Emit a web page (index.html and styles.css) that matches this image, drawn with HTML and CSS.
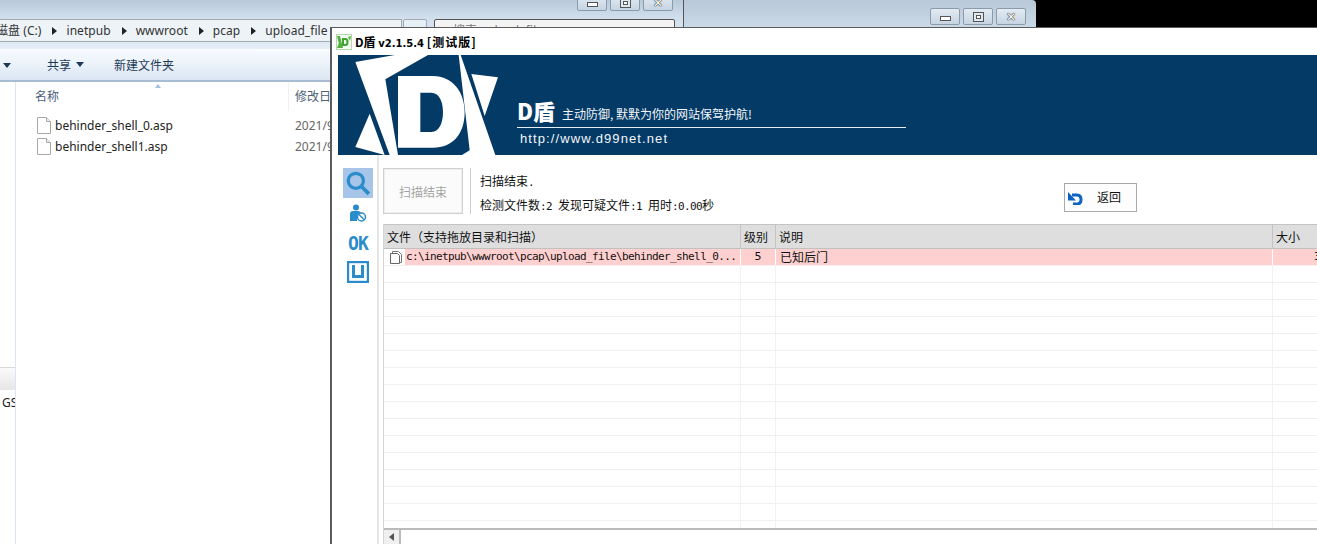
FILE: index.html
```html
<!DOCTYPE html>
<html lang="zh">
<head>
<meta charset="utf-8">
<title>D盾</title>
<link rel="stylesheet" href="styles.css">
</head>
<body>
<div class="desktop">
  <div class="win-back">
    <div class="controls">
      <span class="ctl"><i class="g-min"></i></span>
      <span class="ctl"><i class="g-max"></i></span>
      <span class="ctl g-close">✕</span>
    </div>
  </div>

  <div class="explorer">
    <div class="ex-title">
      <div class="controls">
        <span class="ctl"><i class="g-min"></i></span>
        <span class="ctl"><i class="g-max"></i></span>
        <span class="ctl g-close">✕</span>
      </div>
    </div>
    <div class="ex-address">
      <div class="crumbs">
        <span>磁盘 (C:)</span><b class="sep"></b>
        <span>inetpub</span><b class="sep"></b>
        <span>wwwroot</span><b class="sep"></b>
        <span>pcap</span><b class="sep"></b>
        <span>upload_file</span>
      </div>
      <div class="refresh"></div>
      <div class="search"><span>搜索 upload_file</span></div>
    </div>
    <div class="ex-toolbar">
      <b class="caret first"></b>
      <span class="tool">共享</span><b class="caret"></b>
      <span class="tool new">新建文件夹</span>
    </div>
    <div class="ex-main">
      <div class="ex-nav">
        <div class="nav-box"></div>
        <div class="nav-text">GS</div>
      </div>
      <div class="ex-list">
        <div class="ex-head">
          <span class="col-name">名称</span>
          <span class="col-date">修改日期</span>
        </div>
        <div class="ex-file">
          <svg class="doc" viewBox="0 0 14 17"><path d="M.5.5h9l4 4v12H.5z" fill="#fff" stroke="#a8a8a8"/><path d="M9.5.5v4h4" fill="#eee" stroke="#a8a8a8"/></svg>
          <span class="fname">behinder_shell_0.asp</span><span class="fdate">2021/9/1</span>
        </div>
        <div class="ex-file">
          <svg class="doc" viewBox="0 0 14 17"><path d="M.5.5h9l4 4v12H.5z" fill="#fff" stroke="#a8a8a8"/><path d="M9.5.5v4h4" fill="#eee" stroke="#a8a8a8"/></svg>
          <span class="fname">behinder_shell1.asp</span><span class="fdate">2021/9/1</span>
        </div>
      </div>
    </div>
  </div>

  <div class="dwin">
    <div class="d-title">
      <svg class="d-logo" viewBox="0 0 16 16">
        <rect x="0.5" y="0.5" width="15" height="15" fill="#f4fbf1" stroke="#b5d8a8"/>
        <path d="M1 2h3l3 12H4zM15 2l-3 1 2 4zM1 14l2-5 1 5z" fill="#55b043"/>
        <path d="M6 4h3.500q3 0 3 4t-3 4H6zM8 6v4h1.300q1.200 0 1.200-2t-1.200-2z" fill="#3fa32f"/>
      </svg>
      <span class="d-name">D盾 <span class="ver">v2.1.5.4</span> <span class="tag">[测试版]</span></span>
    </div>
    <div class="banner">
      <svg class="b-logo" viewBox="0 9 510 300">
        <path fill="#fff" d="M52 30 170 9h100L142 82l38 227h-25zM362 9h6l104 300H372l23-14zM400 66l80 10-40 116zM95 185l45 124-88-24z"/>
        <path fill="#fff" fill-rule="evenodd" d="M180 72h105c60 0 95 50 95 108 0 65-35 107-95 107H180zM247 122v118h33c25 0 35-30 35-60 0-32-12-58-35-58z"/>
      </svg>
      <div class="b-copy">
        <div class="b-head"><span class="b-brand">D盾</span><span class="b-slogan">主动防御, 默默为你的网站保驾护航!</span></div>
        <div class="b-url">http://www.d99net.net</div>
      </div>
    </div>
    <div class="d-body">
      <div class="side">
        <div class="s-btn active">
          <svg viewBox="0 0 24 24" width="26" height="26"><circle cx="10" cy="10" r="7" fill="none" stroke="#2b8ccb" stroke-width="3"/><path d="M15 15l7 7" stroke="#2b8ccb" stroke-width="3.500"/></svg>
        </div>
        <div class="s-btn person">
          <svg viewBox="0 0 18 18" width="18" height="18"><circle cx="7" cy="3.500" r="3" fill="#2b8ccb"/><path d="M1 17V10q0-3 3-3h5q2 0 3 2l-4 4v4z" fill="#2b8ccb"/><circle cx="12.500" cy="13" r="4" fill="#fff" stroke="#2b8ccb" stroke-width="1.500"/><path d="M10 10.500l5 5" stroke="#2b8ccb" stroke-width="1.500"/></svg>
        </div>
        <div class="s-btn ok">OK</div>
        <div class="s-btn">
          <svg viewBox="0 0 22 22" width="22" height="22"><rect x="1" y="1" width="20" height="20" fill="none" stroke="#2b8ccb" stroke-width="2.400"/><path d="M6.500 4v11.500h9V4" fill="none" stroke="#2b8ccb" stroke-width="3"/></svg>
        </div>
      </div>
      <div class="content">
        <div class="topline">
          <div class="scan-btn">扫描结束</div>
          <div class="status">
            <div>扫描结束<span class="a">.</span></div>
            <div>检测文件数<span class="a">:2 </span>发现可疑文件<span class="a">:1 </span>用时<span class="a">:0.00</span>秒</div>
          </div>
          <div class="back-btn">
            <svg viewBox="0 0 16 14" width="16" height="14"><path d="M5 4h5q4 0 4 4.500T10 13H6" fill="none" stroke="#0d63c4" stroke-width="3"/><path d="M1 1v8.500h8z" fill="#0d63c4"/></svg>
            <span>返回</span>
          </div>
        </div>
        <div class="grid">
          <div class="row head"><div class="c1">文件（支持拖放目录和扫描）</div><div class="c2">级别</div><div class="c3">说明</div><div class="c4">大小</div></div>
          <div class="row hit">
            <div class="c1 path">
              <svg class="pdoc" viewBox="0 0 12 13"><path d="M2.500 2.500V.5h6l3 3v8h-2" fill="#fff" stroke="#777"/><path d="M.5 2.500h7l2 2v8h-9z" fill="#fff" stroke="#666"/></svg>
              <span class="ptext">c:\inetpub\wwwroot\pcap\upload_file\behinder_shell_0...</span>
            </div>
            <div class="c2 lvl">5</div><div class="c3">已知后门</div><div class="c4 size">3</div>
          </div>
          <div class="row"><div class="c1"></div><div class="c2"></div><div class="c3"></div><div class="c4"></div></div>
          <div class="row"><div class="c1"></div><div class="c2"></div><div class="c3"></div><div class="c4"></div></div>
          <div class="row"><div class="c1"></div><div class="c2"></div><div class="c3"></div><div class="c4"></div></div>
          <div class="row"><div class="c1"></div><div class="c2"></div><div class="c3"></div><div class="c4"></div></div>
          <div class="row"><div class="c1"></div><div class="c2"></div><div class="c3"></div><div class="c4"></div></div>
          <div class="row"><div class="c1"></div><div class="c2"></div><div class="c3"></div><div class="c4"></div></div>
          <div class="row"><div class="c1"></div><div class="c2"></div><div class="c3"></div><div class="c4"></div></div>
          <div class="row"><div class="c1"></div><div class="c2"></div><div class="c3"></div><div class="c4"></div></div>
          <div class="row"><div class="c1"></div><div class="c2"></div><div class="c3"></div><div class="c4"></div></div>
          <div class="row"><div class="c1"></div><div class="c2"></div><div class="c3"></div><div class="c4"></div></div>
          <div class="row"><div class="c1"></div><div class="c2"></div><div class="c3"></div><div class="c4"></div></div>
          <div class="row"><div class="c1"></div><div class="c2"></div><div class="c3"></div><div class="c4"></div></div>
          <div class="row"><div class="c1"></div><div class="c2"></div><div class="c3"></div><div class="c4"></div></div>
          <div class="row"><div class="c1"></div><div class="c2"></div><div class="c3"></div><div class="c4"></div></div>
          <div class="row"><div class="c1"></div><div class="c2"></div><div class="c3"></div><div class="c4"></div></div>
          <div class="fill"><div class="c1"></div><div class="c2"></div><div class="c3"></div><div class="c4"></div></div>
          <div class="hscroll"><div class="arrow"></div><div class="track"></div></div>
        </div>
      </div>
    </div>
  </div>
</div>
</body>
</html>
```
FILE: styles.css
```css
* { box-sizing: border-box; }
html, body { margin: 0; height: 100%; overflow: hidden; background: #000; }
body { font: 12px "Noto Sans CJK SC", "Liberation Sans", sans-serif; color: #111; }
.desktop { position: relative; width: 1317px; height: 544px; overflow: hidden; background: #000; }

/* windows on the desktop */
.win-back {
  position: absolute; left: 683px; top: 0; width: 353px; height: 40px;
  background: linear-gradient(#b8c8d8, #d4e1ee);
  border-left: 1px solid #555; border-top-right-radius: 4px;
}
.win-back .controls { position: absolute; right: 10px; top: 8px; }
.controls { display: flex; gap: 3px; }
.ctl {
  width: 30px; height: 17px; display: flex; align-items: center; justify-content: center;
  border: 1px solid #8b9bab; border-radius: 2px; background: linear-gradient(#e3ebf3, #c6d4e2);
}
.g-min { width: 11px; height: 5px; margin-top: 3px; border: 1px solid #555; background: #fff; }
.g-max { width: 11px; height: 10px; border: 1px solid #555; background: #fff; box-shadow: inset 0 0 0 2px #dfe7ef, inset 0 0 0 3px #555; }
.g-close { font: 700 12px/1 "DejaVu Sans", sans-serif; color: #fff; text-shadow: 0 0 1px #333, 0 0 1px #333, 0 0 1px #333; }

.explorer {
  position: absolute; left: 0; top: 0; width: 683px; height: 544px;
  display: flex; flex-direction: column; background: #fff; overflow: hidden;
}
.ex-title { height: 19px; flex: none; background: linear-gradient(#b9c9d9, #d2e0ee); position: relative; }
.ex-title .controls { position: absolute; left: 577px; top: -6px; }
.ex-address {
  height: 30px; flex: none; display: flex; align-items: flex-start; padding-right: 8px;
  background: linear-gradient(#d2e0ee, #dbe7f3 70%, #e6eef7);
}
.crumbs {
  width: 412px; flex: none; height: 23px; display: flex; align-items: center; gap: 7px; overflow: hidden; white-space: nowrap;
  margin-left: -10px; padding-left: 6px; background: #eef3f8; border: 1px solid #a3aab2; border-left: 0;
  color: #333; font: 12px/21px "Noto Sans", "Noto Sans CJK SC", sans-serif; letter-spacing: .05px;
}
.sep { flex: none; width: 0; height: 0; border: 4px solid transparent; border-left: 5px solid #222; border-right: 0; margin: 0 2px 0 4px; }
.refresh { width: 24px; height: 23px; flex: none; margin-left: 1px; border: 1px solid #a3aab2; border-radius: 2px; background: #e6eef6; }
.search {
  flex: 1; height: 21px; margin-left: 7px; padding: 0 18px; font-size: 12px; color: #777;
  background: #f4f4f4; border: 1px solid #555; border-radius: 2px; line-height: 19px;
}
.ex-toolbar {
  height: 33px; flex: none; display: flex; align-items: center; padding-left: 47px;
  background: linear-gradient(#f8fbfe, #ecf3fa 45%, #dae6f3); border-bottom: 2px solid #a9bdd2;
  color: #1e3958; position: relative;
}
.tool { line-height: 16px; }
.tool.new { margin-left: 30px; }
.caret { width: 0; height: 0; border: 4px solid transparent; border-top: 5px solid #1e3958; border-bottom: 0; margin-left: 5px; }
.caret.first { position: absolute; left: 3px; top: 14px; margin: 0; }
.ex-main { flex: 1; display: flex; min-height: 0; }
.ex-nav { width: 16px; flex: none; border-right: 1px solid #dce6f2; overflow: hidden; padding-top: 285px; }
.nav-box { height: 23px; background: linear-gradient(#fafafa, #e6e6e6); border-top: 1px solid #d8d8d8; }
.nav-text { margin: 3px 0 0 2px; font: 12px/20px "Noto Sans", sans-serif; color: #222; white-space: nowrap; }
.ex-list { flex: 1; position: relative; }
.ex-head { height: 29px; display: flex; padding-left: 19px; align-items: flex-end; color: #4c607a; line-height: 20px; position: relative; }
.ex-head::before { content: ""; position: absolute; left: 139px; top: 2px; border: 3px solid transparent; border-bottom: 4px solid #9fc0de; border-top: 0; }
.col-name { width: 254px; border-right: 1px solid #eef1f5; height: 29px; padding-top: 4px; }
.col-date { padding-left: 6px; height: 29px; line-height: 28px; }
.ex-file { height: 21px; display: flex; align-items: center; padding-left: 21px; position: relative; top: 4px; }
.doc { width: 14px; height: 17px; flex: none; }
.fname { width: 244px; padding-left: 4px; font: 12px "Noto Sans", sans-serif; color: #222; }
.fdate { color: #666; font: 12px "Noto Sans", sans-serif; }

.dwin {
  position: absolute; left: 330px; top: 27px; width: 1000px; height: 530px;
  display: flex; flex-direction: column; background: #fff;
  border-left: 2px solid #5c5c5c; border-top: 1px solid #5c5c5c; overflow: hidden;
}
.d-title { height: 27px; flex: none; display: flex; align-items: center; padding-left: 4px; }
.d-logo { width: 16px; height: 16px; flex: none; }
.d-name { margin-left: 3px; font: 700 12px "Noto Sans CJK SC", sans-serif; color: #000; }
.ver { font: 700 10px "DejaVu Sans", sans-serif; }
.tag { letter-spacing: 1px; }
.banner { height: 100px; flex: none; margin-left: 6px; display: flex; background: #043a66; color: #fff; }
.b-logo { width: 170px; height: 100px; flex: none; }
.b-copy { margin-left: 9px; width: 389px; padding-top: 41px; }
.b-head { height: 32px; border-bottom: 1px solid #e6eef5; display: flex; align-items: flex-end; white-space: nowrap; padding-bottom: 3px; }
.b-brand { font: 900 22px/27px "Noto Sans CJK SC", sans-serif; width: 45px; flex: none; }
.b-slogan { font: 12px/20px "Noto Sans CJK SC", sans-serif; color: #f2f6f9; }
.b-url { margin-left: 3px; font: 13px/20px "Liberation Sans", sans-serif; letter-spacing: 1.1px; color: #f2f6f9; padding-top: 1px; }

.d-body { flex: 1; display: flex; min-height: 0; padding-left: 11px; }
.side { width: 36px; flex: none; border-right: 2px solid #e6e6e6; padding-top: 13px; margin-right: 4px; }
.s-btn { width: 30px; height: 30px; display: flex; align-items: center; justify-content: center; margin-bottom: -1px; }
.s-btn.active { background: #a6c5e8; margin-bottom: 1px; }
.s-btn.person { margin-top: -1px; margin-bottom: 0; }
.s-btn.ok { font: 700 20px/30px "DejaVu Sans Mono", monospace; color: #2b8ccb; letter-spacing: -1px; transform: scaleX(.9); }
.content { flex: 1; display: flex; flex-direction: column; min-width: 0; padding-top: 13px; }
.topline { height: 56px; flex: none; display: flex; position: relative; }
.scan-btn { width: 80px; height: 46px; display: flex; align-items: center; justify-content: center; color: #a4a4a4; background: #fbfbfb; border: 1px solid #d0d0d0; box-shadow: inset 0 0 0 1px #eee; }
.status { margin-left: 7px; height: 46px; padding: 1px 0 0 9px; border-left: 1px solid #ccc; line-height: 24px; color: #111; white-space: nowrap; }
.a { font: 11px "DejaVu Sans Mono", monospace; letter-spacing: -.62px; white-space: pre; }
.back-btn {
  position: absolute; left: 681px; top: 15px; width: 73px; height: 29px; display: flex; align-items: center;
  border: 1px solid #aaa; background: #fdfdfd; padding-left: 2px;
}
.back-btn span { margin-left: 14px; padding-bottom: 2px; }
.grid { flex: 1; display: flex; flex-direction: column; width: 945px; min-height: 0; border-left: 1px solid #d4d4d4; }
.row, .fill { display: flex; flex: none; height: 17px; border-bottom: 1px solid #efefef; }
.fill { height: 7px; border-bottom: 0; }
.c1, .c2, .c3, .c4 { flex: none; border-right: 1px solid #f2f2f2; white-space: nowrap; overflow: hidden; }
.c1 { width: 357px; } .c2 { width: 35px; } .c3 { width: 497px; } .c4 { width: 55px; border-right: 0; }
.row.head { height: 25px; background: #dedede; border-top: 1px solid #c4c4c4; border-bottom: 1px solid #c0c0c0; line-height: 23px; color: #111; }
.head .c1, .head .c2, .head .c3, .head .c4 { padding-left: 3px; border-right: 1px solid #c4c4c4; }
.row.hit { height: 17px; background: #ffd0d0; line-height: 16px; border-bottom-color: #f6efef; }
.hit .c1, .hit .c2, .hit .c3 { border-right-color: #fff; }
.c1.path { display: flex; align-items: center; padding-left: 6px; background: linear-gradient(90deg, #fff 21px, transparent 21px); }
.pdoc { width: 12px; height: 13px; flex: none; }
.ptext { margin-left: 4px; font: 11px/16px "DejaVu Sans Mono", monospace; letter-spacing: -.62px; color: #111; }
.lvl { text-align: center; font: 11px/16px "DejaVu Sans", sans-serif; }
.hit .c3 { padding-left: 4px; }
.size { padding-left: 41px; font: 11px/16px "DejaVu Sans", sans-serif; }
.hscroll { display: flex; flex: none; height: 16px; border-top: 2px solid #bbb; background: #fff; }
.arrow { width: 17px; background: #f0f0f0; position: relative; border-right: 2px solid #bbb; }
.arrow::after { content: ""; position: absolute; left: 5px; top: 3px; border: 4px solid transparent; border-right: 5px solid #555; border-left: 0; }
.track { flex: 1; }
```
